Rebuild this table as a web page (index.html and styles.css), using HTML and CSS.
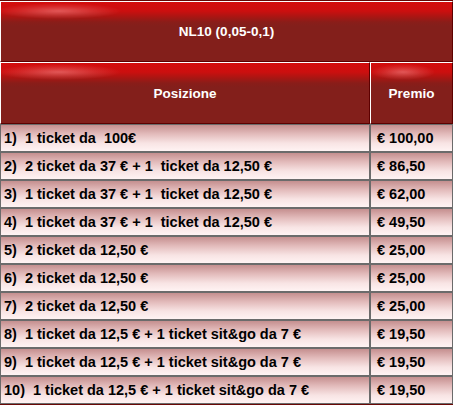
FILE: index.html
```html
<!DOCTYPE html>
<html lang="it">
<head>
<meta charset="utf-8">
<title>NL10 (0,05-0,1)</title>
<link rel="stylesheet" href="styles.css">
</head>
<body>
<table class="prizes">
<colgroup><col class="col-pos"><col class="col-prize"></colgroup>
<thead>
<tr class="title-row"><th colspan="2" class="head">NL10 (0,05-0,1)</th></tr>
<tr class="head-row"><th class="head">Posizione</th><th class="head head-small">Premio</th></tr>
</thead>
<tbody>
<tr><td class="pos">1)  1 ticket da  100€</td><td class="prize">€ 100,00</td></tr>
<tr><td class="pos">2)  2 ticket da 37 € + 1  ticket da 12,50 €</td><td class="prize">€ 86,50</td></tr>
<tr><td class="pos">3)  1 ticket da 37 € + 1  ticket da 12,50 €</td><td class="prize">€ 62,00</td></tr>
<tr><td class="pos">4)  1 ticket da 37 € + 1  ticket da 12,50 €</td><td class="prize">€ 49,50</td></tr>
<tr><td class="pos">5)  2 ticket da 12,50 €</td><td class="prize">€ 25,00</td></tr>
<tr><td class="pos">6)  2 ticket da 12,50 €</td><td class="prize">€ 25,00</td></tr>
<tr><td class="pos">7)  2 ticket da 12,50 €</td><td class="prize">€ 25,00</td></tr>
<tr><td class="pos">8)  1 ticket da 12,5 € + 1 ticket sit&amp;go da 7 €</td><td class="prize">€ 19,50</td></tr>
<tr><td class="pos">9)  1 ticket da 12,5 € + 1 ticket sit&amp;go da 7 €</td><td class="prize">€ 19,50</td></tr>
<tr><td class="pos">10)  1 ticket da 12,5 € + 1 ticket sit&amp;go da 7 €</td><td class="prize">€ 19,50</td></tr>
</tbody>
</table>
</body>
</html>
```
FILE: styles.css
```css
html, body {
  margin: 0;
  padding: 0;
}
body {
  background: #6a0806;
  font-family: "Liberation Sans", Arial, sans-serif;
}
.prizes {
  width: 453px;
  table-layout: fixed;
  border-collapse: separate;
  border-spacing: 0;
  border-top: 1px solid #640604;
}
.col-pos { width: 370px; }
.col-prize { width: 83px; }

.title-row { height: 61px; }
.head-row { height: 62px; }
.prizes tbody tr { height: 28px; }

.head {
  padding: 0;
  color: #fff;
  font-size: 13.5px;
  font-weight: bold;
  text-align: center;
  vertical-align: middle;
  border: 1px solid;
  border-color: #fff #5c0000 #5c0000 #fff;
  background:
    radial-gradient(ellipse 62px 8px at 58px 9px, rgba(255, 185, 185, 0.42), rgba(255, 185, 185, 0.15) 60%, rgba(255, 185, 185, 0) 100%),
    linear-gradient(#d30d0d 0, #cc0f0f 9px, #a81613 15px, #8a1d19 20px, #831f1b 24px, #831f1b 100%);
  background-color: #831f1b;
}
.head-small {
  background:
    radial-gradient(ellipse 32px 8px at 32px 9px, rgba(255, 185, 185, 0.42), rgba(255, 185, 185, 0.15) 60%, rgba(255, 185, 185, 0) 100%),
    linear-gradient(#d30d0d 0, #cc0f0f 9px, #a81613 15px, #8a1d19 20px, #831f1b 24px, #831f1b 100%);
}

.pos, .prize {
  border: 1px solid #6b6b6b;
  font-size: 14.5px;
  font-weight: bold;
  color: #000;
  white-space: pre;
  vertical-align: middle;
  background: linear-gradient(#c58f8f 0, #e3bcbc 35%, #f8e4e4 70%, #fff3f3 100%);
}
.pos { padding: 0 0 0 3px; }
.prize { padding: 0 0 0 6px; }
```
